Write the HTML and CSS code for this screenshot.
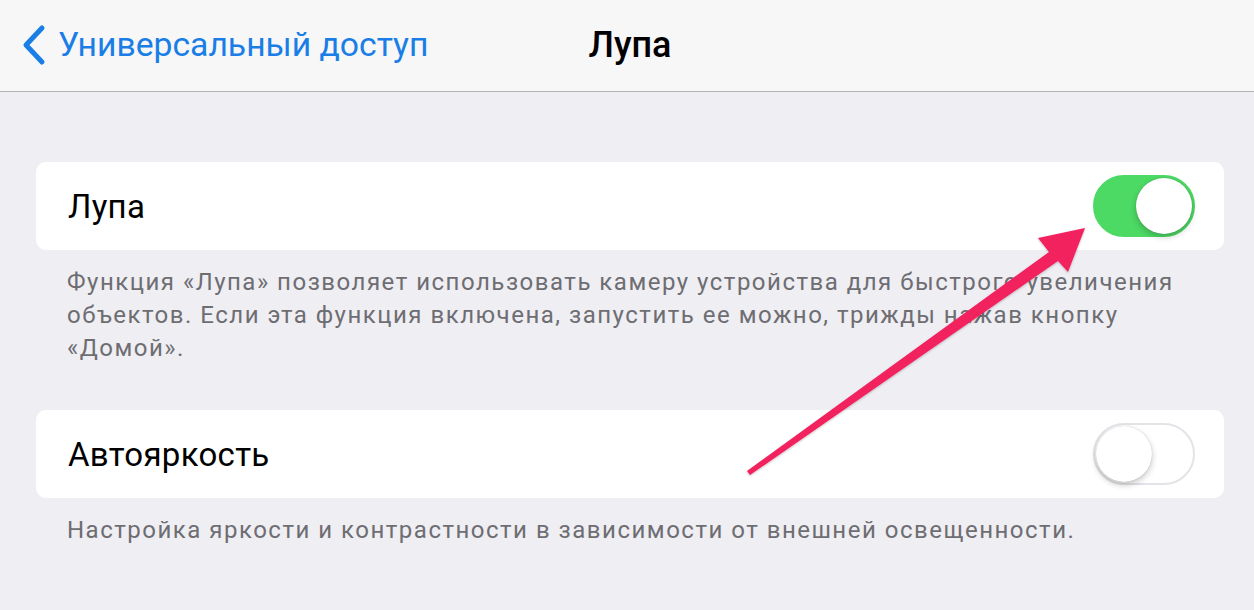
FILE: index.html
```html
<!DOCTYPE html>
<html lang="ru">
<head>
    <meta charset="UTF-8">
    <title>Лупа</title>
    <link rel="stylesheet" href="styles.css">
</head>
<body>
    <div class="nav-bar">
        <a class="back-link" href="#">
            <svg class="chevron" width="26" height="42" viewBox="0 0 26 42">
                <path d="M22 4 L6 21 L22 38" fill="none" stroke="#1a7ee6" stroke-width="5" stroke-linecap="round" stroke-linejoin="round"/>
            </svg>
            <span>Универсальный доступ</span>
        </a>
        <h1 class="nav-title">Лупа</h1>
    </div>

    <div class="settings">
        <div class="cell">
            <span class="cell-label">Лупа</span>
            <div class="switch on"><div class="knob"></div></div>
        </div>
        <p class="footer-note">Функция «Лупа» позволяет использовать камеру устройства для быстрого увеличения<br>объектов. Если эта функция включена, запустить ее можно, трижды нажав кнопку<br>«Домой».</p>

        <div class="cell second">
            <span class="cell-label">Автояркость</span>
            <div class="switch"><div class="knob"></div></div>
        </div>
        <p class="footer-note">Настройка яркости и контрастности в зависимости от внешней освещенности.</p>
    </div>

    <svg class="pointer-arrow" width="1254" height="610" viewBox="0 0 1254 610">
        <defs>
            <filter id="soft" x="-10%" y="-10%" width="120%" height="120%">
                <feDropShadow dx="0" dy="1" stdDeviation="1.2" flood-color="#000" flood-opacity="0.25"/>
            </filter>
        </defs>
        <polygon filter="url(#soft)" fill="#f2205f"
                 points="747,471 1049,252 1038,238 1085,228 1068,272 1058,261 750,475"/>
    </svg>
</body>
</html>
```

FILE: styles.css
```css
body {
    margin: 0;
    width: 1254px;
    height: 610px;
    overflow: hidden;
    background-color: #efeef3;
    font-family: Roboto, "Noto Sans", sans-serif;
    position: relative;
}
.nav-bar {
    height: 91px;
    background-color: #f7f7f8;
    border-bottom: 1px solid #b3b3b6;
    display: flex;
    align-items: center;
    position: relative;
}
.back-link {
    display: flex;
    align-items: center;
    gap: 12px;
    padding-left: 20px;
    color: #1a7ee6;
    text-decoration: none;
    font-size: 33.7px;
    margin-top: -2px;
}
.nav-title {
    position: absolute;
    left: 0;
    right: 0;
    margin: 0;
    padding-left: 6px;
    text-align: center;
    font-size: 36px;
    font-weight: 500;
    color: #000;
    margin-top: -2px;
    pointer-events: none;
}
.settings {
    padding: 70px 30px 0 36px;
}
.cell {
    height: 88px;
    background-color: #fff;
    border-radius: 10px;
    display: flex;
    align-items: center;
    justify-content: space-between;
    padding: 0 29px 0 32px;
}
.cell.second {
    margin-top: 45px;
}
.cell-label {
    font-size: 33px;
    letter-spacing: 0.3px;
    color: #000;
}
.switch {
    width: 102px;
    height: 62px;
    border-radius: 31px;
    box-sizing: border-box;
    border: 2px solid #e4e4e8;
    background-color: #fff;
    position: relative;
}
.switch .knob {
    position: absolute;
    top: 1px;
    left: 1px;
    width: 56px;
    height: 56px;
    border-radius: 50%;
    background-color: #fff;
    box-shadow: 0 3px 6px rgba(0, 0, 0, 0.22), 0 0 1px rgba(0, 0, 0, 0.25);
}
.switch.on {
    background-color: #4cd964;
    border-color: #4cd964;
}
.switch.on .knob {
    left: auto;
    right: 1px;
}
.footer-note {
    margin: 0;
    padding: 16px 0 0 31px;
    font-size: 24px;
    letter-spacing: 1.5px;
    line-height: 33px;
    color: #6d6d72;
    white-space: nowrap;
}
.pointer-arrow {
    position: absolute;
    left: 0;
    top: 0;
    pointer-events: none;
}
```
